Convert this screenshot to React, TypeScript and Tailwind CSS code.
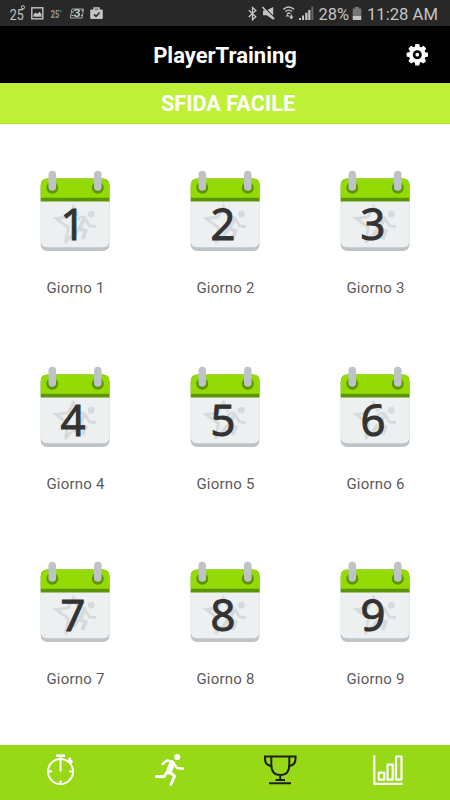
import { Fragment } from "react";

const days = [1, 2, 3, 4, 5, 6, 7, 8, 9];

export default function App() {
  return (
    <div className="flex h-[800px] w-[450px] flex-col overflow-hidden bg-white font-['Roboto',sans-serif]">
      <StatusBar />
      <header className="grid h-[57px] shrink-0 grid-cols-[66px_1fr_66px] items-center bg-black text-white">
        <span />
        <h1 className="pt-[3px] text-center text-[22px] leading-7 font-bold">
          PlayerTraining
        </h1>
        <GearIcon />
      </header>
      <h2 className="h-[41px] shrink-0 border-b border-[#b0e52c] bg-[#bdf037] pt-[7px] pl-[6px] text-center text-[21.7px] leading-7 font-bold text-white">
        SFIDA FACILE
      </h2>
      <main className="grid flex-1 auto-rows-[195.6px] grid-cols-3 overflow-hidden">
        {days.map((day) => (
          <div key={day} className="flex flex-col items-center pt-[46px]">
            <CalendarDay day={day} />
            <p className="mt-[25px] pl-px text-[15px] leading-[22px] tracking-[0.2px] text-[#5a5a5a]">
              Giorno {day}
            </p>
          </div>
        ))}
      </main>
      <TabBar />
    </div>
  );
}

function StatusBar() {
  return (
    <div className="flex h-[26px] shrink-0 items-center justify-between bg-[#282828] text-[#c4c4c4]">
      <svg width="110" height="26" viewBox="0 0 110 26" fill="currentColor">
        <text x="9.7" y="20" fontSize="15" textLength="14" lengthAdjust="spacingAndGlyphs">25</text>
        <circle cx="23" cy="7.3" r="1.6" fill="none" stroke="currentColor" />
        <rect x="31.8" y="7.8" width="11" height="11" fill="none" stroke="currentColor" strokeWidth="1.4" />
        <path d="M33.5 16.8v-2.4l2.1-1.8 1.7 1.3 2.2-2.2 2 2.5v2.6z" />
        <text x="50.7" y="17.5" fontSize="11" fontWeight="700" fill="#999" textLength="8.5" lengthAdjust="spacingAndGlyphs">25</text>
        <circle cx="60.5" cy="11" r="1.2" fill="#28738a" />
        <path d="M72 9h11.5l-1.5 9H70.3z" fill="none" stroke="#a8a8a8" />
        <text x="73.5" y="17.3" fontSize="10.5" fontWeight="700" textLength="7" lengthAdjust="spacingAndGlyphs">3</text>
        <path d="M72 12h2m-2.5 3.5h2m8-5h1.5m-2 5h1.5" stroke="currentColor" />
        <path d="M91.2 9.500h10.600q1 0 1 1v7.500q0 1-1 1H91.200q-1 0-1-1v-7.500q0-1 1-1z" />
        <path d="M94 10V8h5v2" fill="none" stroke="currentColor" strokeWidth="1.4" />
        <path d="m94 14.4 2 2 3.5-4" fill="none" stroke="#282828" strokeWidth="1.5" />
      </svg>
      <svg width="215" height="26" viewBox="235 0 215 26" fill="currentColor">
        <path d="m248.8 10.3 7 6.5-3.3 3V7.5l3.3 2.9-7 6.5" fill="none" stroke="currentColor" strokeWidth="1.3" />
        <path d="M263 10.5h3.2l7-3.500v12.700l-6.500-4.500h-3.700z" />
        <path d="m263.5 6.7 12 12" stroke="#282828" strokeWidth="1.3" />
        <path d="m262.3 7 12 12" stroke="currentColor" strokeWidth="1.6" />
        <path d="M283.4 9.400q5.300-4.600 10.600 0M285.300 11.500q3.400-2.800 6.800 0M287 13.700q1.700-1.300 3.400 0" fill="none" stroke="currentColor" strokeWidth="1.4" />
        <path d="m285.5 16.5 2-2.500 2 2.500zm3.500 0h4.600l-2.300 3zM290.700 14.500h1.300v3h-1.300z" />
        <path d="M299 18h2v2h-2zm3-2.500h2V20h-2zm3.200-2.800h2.300V20h-2.300zM308.200 10h2.200v10h-2.200z" />
        <path d="M311.3 6.500h2V20h-2z" fill="#686868" />
        <text x="318.5" y="19.7" fontSize="17" textLength="30.5" lengthAdjust="spacingAndGlyphs">28%</text>
        <path d="M355 7h4v1.500h2.300V16h-8.600V8.500h2.300z" fill="#777" />
        <path d="M352.7 16h8.600v4h-8.600z" />
        <text x="367" y="19.7" fontSize="17" textLength="71" lengthAdjust="spacingAndGlyphs">11:28 AM</text>
      </svg>
    </div>
  );
}

function GearIcon() {
  return (
    <svg width="66" height="57" viewBox="384 26 66 57">
      <g fill="#fff" transform="translate(417.3 54.7)">
        <circle r="8.2" />
        {[0, 45, 90, 135, 180, 225, 270, 315].map((angle) => (
          <path key={angle} d="M-2.800-7-1.900-10.700h3.800L2.800-7z" transform={`rotate(${angle})`} />
        ))}
        <circle r="4.5" fill="#000" />
        <circle r="1.9" />
      </g>
    </svg>
  );
}

function CalendarDay({ day }: { day: number }) {
  return (
    <svg width="70" height="82" viewBox="0 0 70 82" className="shrink-0">
      <path d="M.7 28h68.800v46q0 7-7 7H7.700q-7 0-7-7z" fill="#bdc3c7" />
      <path d="M.7 28h68.800v42.300q0 7-7 7H7.700q-7 0-7-7z" fill="#ecf0f1" />
      <path d="M.7 31.500v-16q0-7 7-7h54.800q7 0 7 7v16z" fill="#5d9404" />
      <path d="M.7 27.700V15.500q0-7 7-7h54.800q7 0 7 7v12.200z" fill="#94db05" />
      <g fill="none" stroke="#d7dadc" strokeWidth="2.8">
        <path d="m25 73 6.500-7.500M25.500 71l3-13.500-12.500-9 12-1.500 5.500-10.500 4.500 9" />
        <path d="M37.500 50q3-4.500 7-2.500l5 8.500 6.500.5" />
        <path d="m44 49-4.500 9.500 6 2.500-3 8M38 59l-5 7" strokeWidth="4" />
      </g>
      <circle cx="51.3" cy="44.2" r="3.4" fill="#d7dadc" />
      {[12.3, 57.8].map((x) => (
        <Fragment key={x}>
          <circle cx={x} cy="17.8" r="6" fill="#5d9404" />
          <rect x={x - 3.8} y="0.8" width="7.6" height="20" rx="3.8" fill="#bdc3c7" />
        </Fragment>
      ))}
      <text
        x="33"
        y="69.5"
        textAnchor="middle"
        fontFamily="'Open Sans', sans-serif"
        fontSize="43.5"
        fontWeight="500"
        fill="#333"
        stroke="#333"
        strokeWidth="1.1"
      >
        {day}
      </text>
    </svg>
  );
}

function TabBar() {
  return (
    <nav className="grid h-[55px] shrink-0 grid-cols-[115px_110px_110px_115px] bg-[#97d817] text-white">
      <svg width="115" height="55" viewBox="0 745 115 55" fill="none" stroke="currentColor" strokeWidth="2">
        <circle cx="60.5" cy="771.5" r="12.5" />
        <path d="M56 755.700h9" strokeWidth="2.6" />
        <path d="M60.500 755v16.500M48 771.500h4m17 0h4m-12.500 9v4M68.500 760.500l2-3" />
        <path d="m69.200 759.700 3 3" strokeWidth="3" />
      </svg>
      <svg width="110" height="55" viewBox="115 745 110 55" fill="none" stroke="currentColor" strokeLinecap="round" strokeLinejoin="round">
        <circle cx="177.2" cy="757" r="3.1" fill="currentColor" stroke="none" />
        <path d="m162.500 764 4.500-3.500 5.500 1.200 4.500 6.300 6 .7" strokeWidth="2.4" />
        <path d="m172 763.500-3 8" strokeWidth="6" />
        <path d="m169.500 772 5 4.200-3.500 8.300M166.500 773l-2.500 3.700-7.500-.2" strokeWidth="3" />
      </svg>
      <svg width="110" height="55" viewBox="225 745 110 55" fill="none" stroke="#20201c" strokeWidth="2" strokeLinejoin="round">
        <path d="M264 756.500h32.500M271.300 756.500v8q0 10.500 9 10.500t9-10.500v-8M280.200 775v5M275.500 780h9.500M269 783.300h22" />
        <path d="M265 756.500v2.500q0 6.500 7 7M295.500 756.500v2.500q0 6.500-7 7" />
      </svg>
      <svg width="115" height="55" viewBox="335 745 115 55" fill="none" stroke="currentColor" strokeWidth="2.2" strokeLinejoin="round">
        <path d="M374.300 755.500v28.300h28.400M378.700 772.700h5.500v7h-5.500zM387.500 764.700h5.200v15h-5.200zM396 756.500h5.500v23.200H396z" />
      </svg>
    </nav>
  );
}
